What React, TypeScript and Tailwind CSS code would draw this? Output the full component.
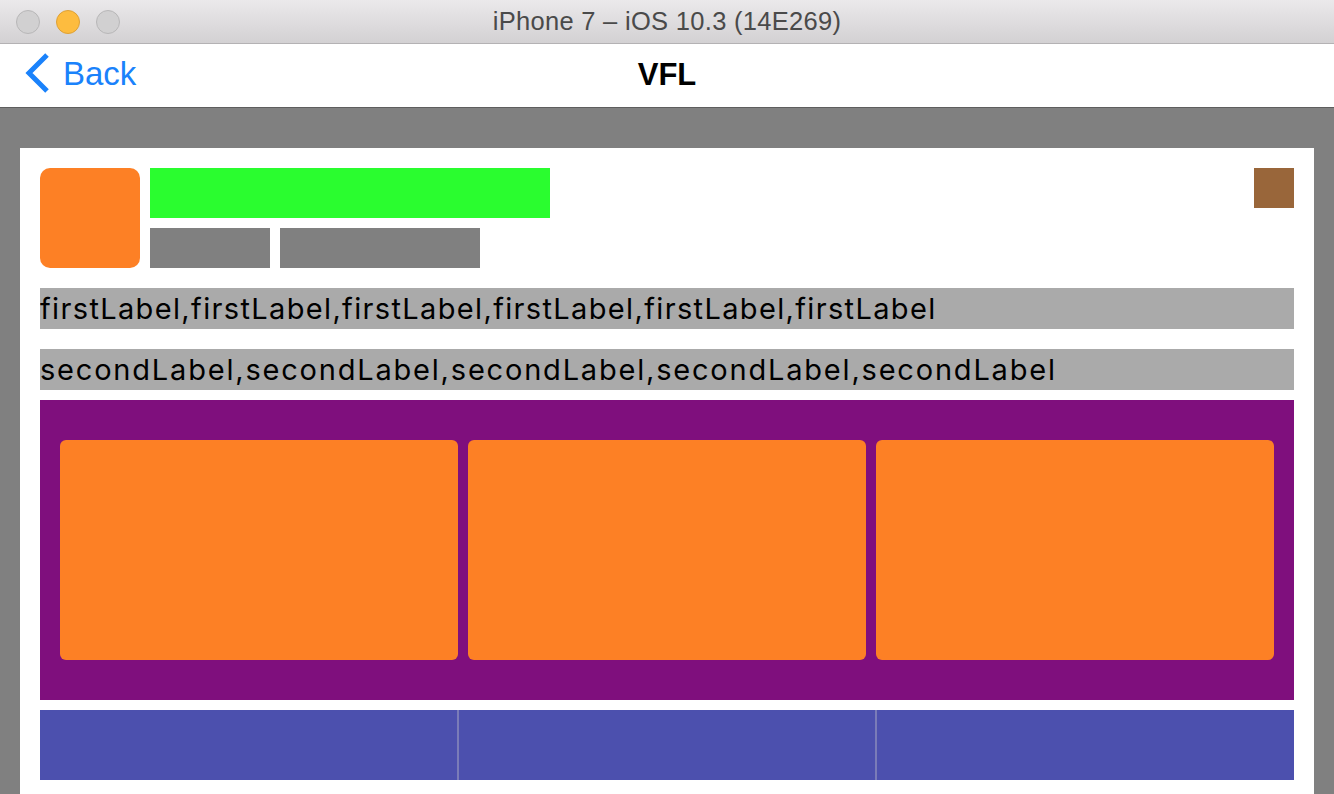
export default function App() {
  const sans = { fontFamily: '"Liberation Sans", Arial, sans-serif' };
  const label = { fontFamily: 'Inter, "Liberation Sans", sans-serif' };
  return (
    <div className="w-[1334px] h-[794px] overflow-hidden bg-[#808080] flex flex-col" style={sans}>
      {/* window title bar */}
      <div className="h-[44px] shrink-0 relative flex items-center justify-center bg-gradient-to-b from-[#ebe9eb] to-[#d3d1d3] border-b border-[#b4b2b4]">
        <div className="absolute left-[16px] top-[10px] flex gap-[16px]">
          <span className="w-[24px] h-[24px] rounded-full bg-[#d1d0d1] border border-[#b8b7b8]" />
          <span className="w-[24px] h-[24px] rounded-full bg-[#fdbc3f] border border-[#dea136]" />
          <span className="w-[24px] h-[24px] rounded-full bg-[#d1d0d1] border border-[#b8b7b8]" />
        </div>
        <span className="text-[25.5px] text-[#4a4a4a] tracking-[0.3px]">iPhone 7 – iOS 10.3 (14E269)</span>
      </div>

      {/* nav bar */}
      <div className="h-[64px] shrink-0 relative flex items-center justify-center bg-white border-b border-[#5e5e5e]">
        <div className="absolute left-[24px] top-[8px] flex items-center gap-[13px] text-[#1a82fb]">
          <svg width="26" height="42" viewBox="0 0 26 42">
            <path d="M23 3 L5 21 L23 39" fill="none" stroke="#1a82fb" strokeWidth="5" />
          </svg>
          <span className="text-[33px] leading-none">Back</span>
        </div>
        <span className="text-[31px] font-bold text-black">VFL</span>
      </div>

      {/* content */}
      <div className="flex-1 px-[20px] pt-[40px]">
        <div className="bg-white h-full p-[20px] flex flex-col">
          <div className="flex">
            <div className="w-[100px] h-[100px] rounded-[10px] bg-[#fd8025]" />
            <div className="ml-[10px] flex flex-col gap-[10px]">
              <div className="w-[400px] h-[50px] bg-[#2afd2f]" />
              <div className="flex gap-[10px]">
                <div className="w-[120px] h-[40px] bg-[#808080]" />
                <div className="w-[200px] h-[40px] bg-[#808080]" />
              </div>
            </div>
            <div className="ml-auto w-[40px] h-[40px] bg-[#99663a]" />
          </div>

          <div className="mt-[20px] h-[41px] bg-[#aaaaaa] flex items-center text-[29px] tracking-[1.35px] text-black whitespace-nowrap overflow-hidden" style={label}>
            firstLabel,firstLabel,firstLabel,firstLabel,firstLabel,firstLabel
          </div>
          <div className="mt-[20px] h-[41px] bg-[#aaaaaa] flex items-center text-[29px] tracking-[1.8px] text-black whitespace-nowrap overflow-hidden" style={label}>
            secondLabel,secondLabel,secondLabel,secondLabel,secondLabel
          </div>

          <div className="mt-[10px] h-[300px] bg-[#7f0f7d] px-[20px] py-[40px] flex gap-[10px]">
            <div className="flex-1 rounded-[6px] bg-[#fd8025]" />
            <div className="flex-1 rounded-[6px] bg-[#fd8025]" />
            <div className="flex-1 rounded-[6px] bg-[#fd8025]" />
          </div>

          <div className="mt-[10px] h-[70px] bg-[#4c50ae] flex">
            <div className="flex-1" />
            <div className="w-[2px] bg-[#7a7cb8]" />
            <div className="flex-1" />
            <div className="w-[2px] bg-[#7a7cb8]" />
            <div className="flex-1" />
          </div>
        </div>
      </div>
    </div>
  );
}
